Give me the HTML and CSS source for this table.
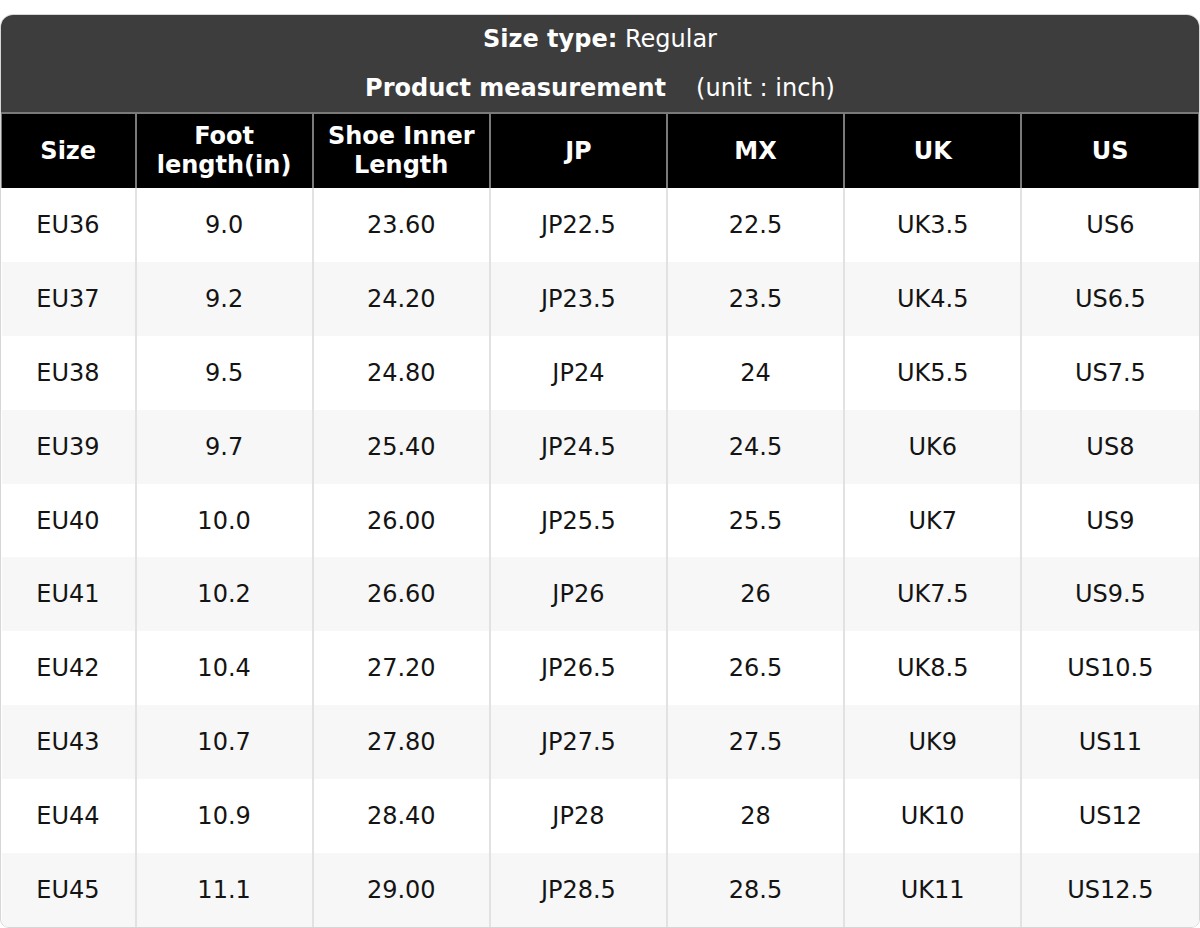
FILE: index.html
```html
<!DOCTYPE html>
<html>
<head>
<meta charset="utf-8">
<link rel="stylesheet" href="styles.css">
</head>
<body>
<div class="chart">
  <div class="caption">
    <div class="cap-line"><b>Size type:</b> Regular</div>
    <div class="cap-line"><b>Product measurement</b><span class="unit">(unit : inch)</span></div>
  </div>
  <table class="sizes">
    <colgroup>
      <col class="c-first"><col><col><col><col><col><col>
    </colgroup>
    <thead>
      <tr><th>Size</th><th>Foot<br>length(in)</th><th>Shoe Inner<br>Length</th><th>JP</th><th>MX</th><th>UK</th><th>US</th></tr>
    </thead>
    <tbody>
      <tr><td>EU36</td><td>9.0</td><td>23.60</td><td>JP22.5</td><td>22.5</td><td>UK3.5</td><td>US6</td></tr>
      <tr><td>EU37</td><td>9.2</td><td>24.20</td><td>JP23.5</td><td>23.5</td><td>UK4.5</td><td>US6.5</td></tr>
      <tr><td>EU38</td><td>9.5</td><td>24.80</td><td>JP24</td><td>24</td><td>UK5.5</td><td>US7.5</td></tr>
      <tr><td>EU39</td><td>9.7</td><td>25.40</td><td>JP24.5</td><td>24.5</td><td>UK6</td><td>US8</td></tr>
      <tr><td>EU40</td><td>10.0</td><td>26.00</td><td>JP25.5</td><td>25.5</td><td>UK7</td><td>US9</td></tr>
      <tr><td>EU41</td><td>10.2</td><td>26.60</td><td>JP26</td><td>26</td><td>UK7.5</td><td>US9.5</td></tr>
      <tr><td>EU42</td><td>10.4</td><td>27.20</td><td>JP26.5</td><td>26.5</td><td>UK8.5</td><td>US10.5</td></tr>
      <tr><td>EU43</td><td>10.7</td><td>27.80</td><td>JP27.5</td><td>27.5</td><td>UK9</td><td>US11</td></tr>
      <tr><td>EU44</td><td>10.9</td><td>28.40</td><td>JP28</td><td>28</td><td>UK10</td><td>US12</td></tr>
      <tr><td>EU45</td><td>11.1</td><td>29.00</td><td>JP28.5</td><td>28.5</td><td>UK11</td><td>US12.5</td></tr>
    </tbody>
  </table>
</div>
</body>
</html>
```
FILE: styles.css
```css
html, body {
  margin: 0;
  padding: 0;
  background: #ffffff;
}
body {
  padding-top: 14px;
  font-family: "DejaVu Sans", sans-serif;
}
.chart {
  width: 1200px;
  box-sizing: border-box;
  border: 1px solid #d6d6d6;
  border-radius: 13px 13px 9px 9px;
  overflow: hidden;
  background: #fff;
}
.caption {
  background: #3d3d3d;
  color: #ffffff;
  text-align: center;
  font-size: 24px;
  height: 97px;
  box-sizing: border-box;
}
.cap-line {
  height: 48.5px;
  line-height: 48px;
}
.cap-line b {
  font-weight: bold;
}
.unit {
  margin-left: 30px;
}
.sizes {
  width: 100%;
  border-collapse: collapse;
  table-layout: fixed;
  font-size: 24px;
}
.c-first {
  width: 134px;
}
.sizes th {
  background: #000;
  color: #fff;
  font-weight: bold;
  height: 74px;
  line-height: 29px;
  padding: 0;
  border-top: 2px solid #7a7a7a;
  border-left: 2px solid #7a7a7a;
  text-align: center;
  vertical-align: middle;
}
.sizes th:first-child {
  border-left: 1px solid #7a7a7a;
}
.sizes th:last-child {
  border-right: 1px solid #7a7a7a;
}
.sizes td {
  height: 73.9px;
  padding: 0;
  text-align: center;
  vertical-align: middle;
  color: #141414;
  border-left: 2px solid #e2e2e2;
}
.sizes td:first-child {
  border-left: none;
}
.sizes tbody tr:nth-child(even) td {
  background: #f7f7f7;
}
```
